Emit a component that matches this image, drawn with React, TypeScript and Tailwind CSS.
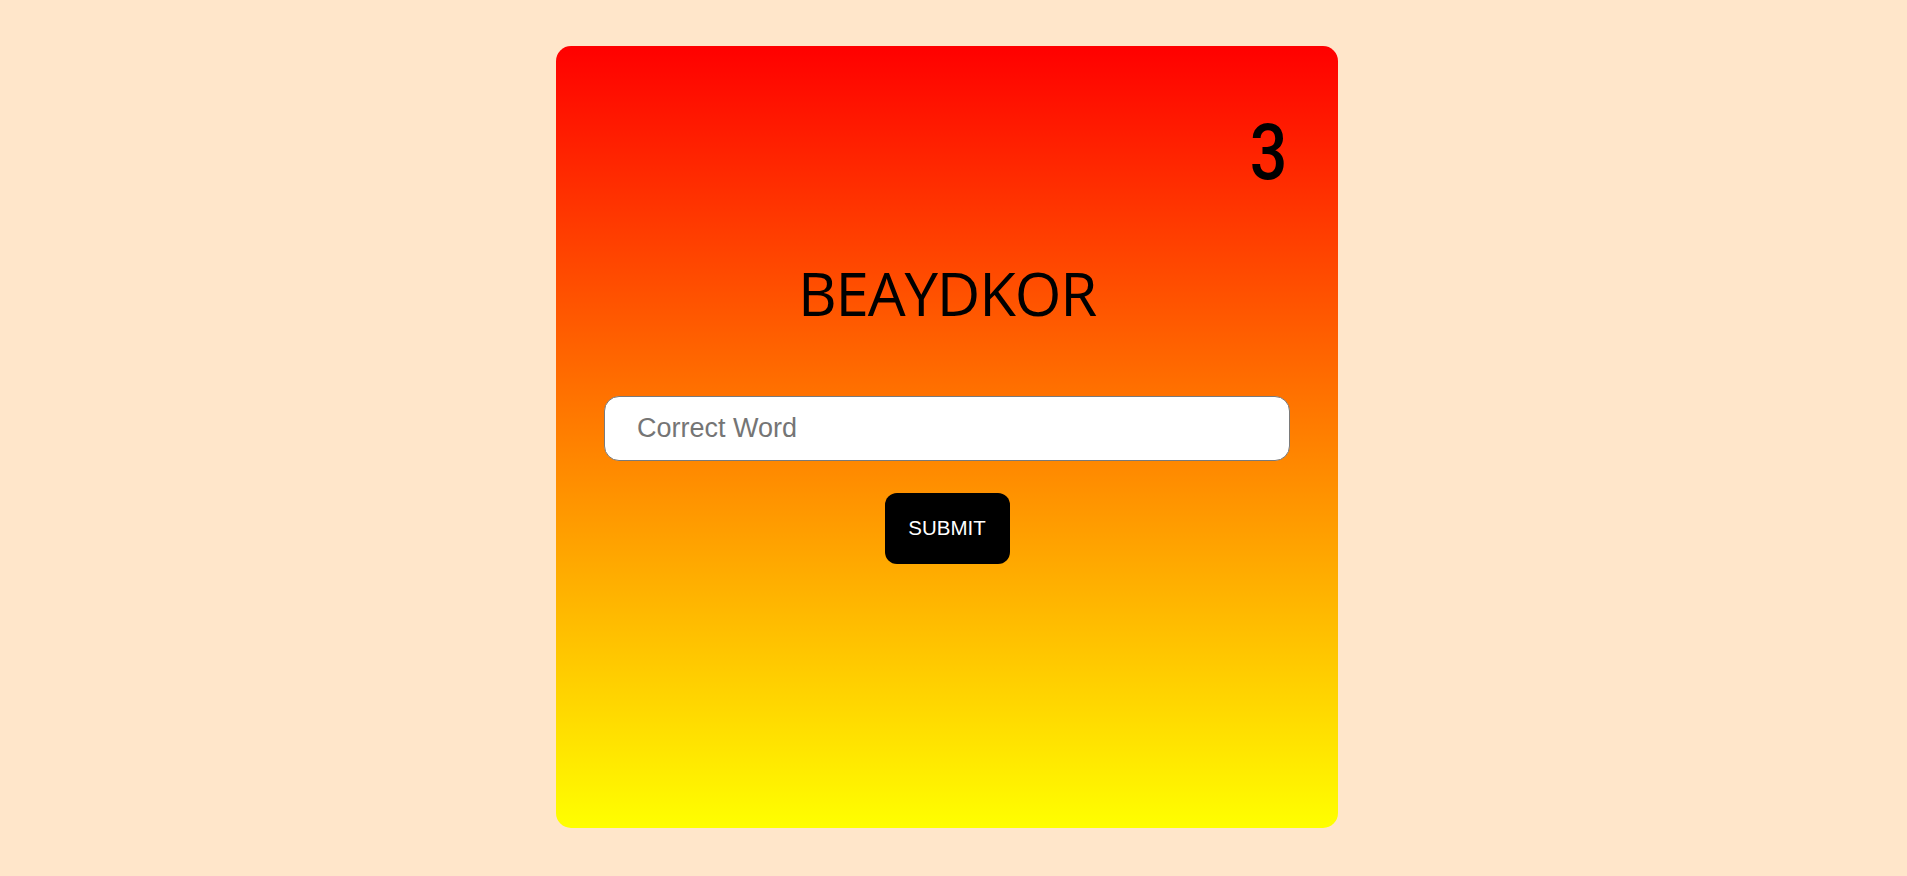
export default function App() {
  return (
    <div className="min-h-screen bg-[#ffe6ca] flex justify-center pt-[46px] pr-[13px]">
      <div className="w-[782px] h-[782px] rounded-[15px] bg-[linear-gradient(to_bottom,#ff0000,#ffff00)] px-12 pt-[68px] flex flex-col">
        {/* Score */}
        <div className="flex justify-end pr-[3px]">
          <span className="inline-block origin-right scale-x-[0.85] text-[78px] leading-none text-black font-['Roboto',sans-serif] font-medium">
            3
          </span>
        </div>

        {/* Scrambled word */}
        <h1 className="mt-[71px] text-center text-[60px] leading-none text-black font-['Open_Sans',sans-serif] font-normal tracking-[-0.02em]">
          BEAYDKOR
        </h1>

        <input
          type="text"
          placeholder="Correct Word"
          className="mt-[73px] h-[65px] w-full rounded-[15px] border border-[#7a7a7a] bg-white pl-8 text-[27px] text-black placeholder:text-[#757575] outline-none font-['Liberation_Sans',Arial,sans-serif]"
        />

        <div className="mt-8 flex justify-center">
          <button className="h-[71px] w-[125px] rounded-[12px] bg-black text-white text-[20.5px] font-['Liberation_Sans',Arial,sans-serif]">
            SUBMIT
          </button>
        </div>
      </div>
    </div>
  );
}
